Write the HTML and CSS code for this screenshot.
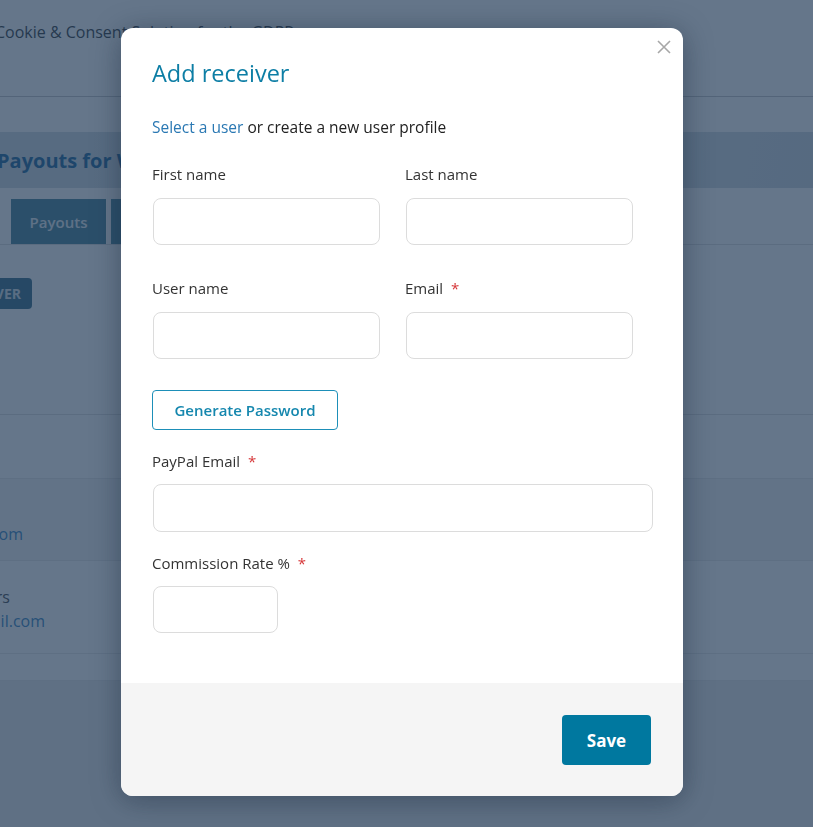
FILE: index.html
```html
<!DOCTYPE html>
<html lang="en">
  <head>
    <meta charset="UTF-8" />
    <meta name="viewport" content="width=device-width, initial-scale=1.0" />
    <title>Add receiver</title>
    <link rel="stylesheet" href="styles.css">
  </head>
  <body>
    <!-- page behind the dialog -->
    <div class="page">
      <div class="topbar">
        <span class="site-title">Cookie &amp; Consent Solution for the GDPR</span>
      </div>
      <div class="banner">
        <h1 class="banner-title">Payouts for WooCommerce</h1>
      </div>
      <div class="tabs">
        <div class="tab">Payouts</div>
        <div class="tab">Receivers</div>
        <div class="tab">Settings</div>
      </div>
      <div class="actions">
        <div class="clip-btn"><span>ADD RECEIVER</span></div>
      </div>
      <div class="table">
        <div class="row row-head"></div>
        <div class="row row-hover">
          <div class="clip w23 link">anna.lee@example.com</div>
        </div>
        <div class="row row-plain">
          <div class="clip w10">Travers</div>
          <div class="clip w45 link">mark.travers@gmail.com</div>
        </div>
        <div class="row row-foot"></div>
      </div>
      <div class="page-bottom"></div>
    </div>

    <div class="overlay">
      <div class="modal">
        <button class="close" aria-label="Close">
          <svg viewBox="0 0 16 16" width="16" height="16">
            <path d="M2 2 L14 14 M14 2 L2 14" stroke="currentColor" stroke-width="1.6" fill="none" />
          </svg>
        </button>
        <div class="modal-body">
          <h2 class="modal-title">Add receiver</h2>
          <p class="intro"><a href="#" class="link-user">Select a user</a> or create a new user profile</p>

          <div class="grid">
            <div class="field">
              <label>First name</label>
              <input type="text" class="input" />
            </div>
            <div class="field">
              <label>Last name</label>
              <input type="text" class="input" />
            </div>
            <div class="field">
              <label>User name</label>
              <input type="text" class="input" />
            </div>
            <div class="field">
              <label>Email <span class="req">*</span></label>
              <input type="text" class="input" />
            </div>
          </div>

          <button class="btn-outline">Generate Password</button>

          <div class="field field-wide">
            <label>PayPal Email <span class="req">*</span></label>
            <input type="text" class="input" />
          </div>

          <div class="field field-small">
            <label>Commission Rate % <span class="req">*</span></label>
            <input type="text" class="input" />
          </div>
        </div>
        <div class="modal-footer">
          <button class="btn-save">Save</button>
        </div>
      </div>
    </div>
  </body>
</html>
```

FILE: styles.css
```css
* {
  margin: 0;
  padding: 0;
  box-sizing: border-box;
}
body {
  width: 813px;
  height: 827px;
  overflow: hidden;
  background-color: #fff;
  font: 15px "Open Sans", "Liberation Sans", sans-serif;
  color: #333;
}

/* page behind */
.page {
  width: 100%;
}
.topbar {
  height: 97px;
  padding-top: 21px;
  border-bottom: 1px solid #c3c4c7;
  white-space: nowrap;
  overflow: hidden;
}
.site-title {
  display: block;
  margin-left: -5px;
  font-size: 16px;
  color: #2c3338;
}
.banner {
  margin-top: 35px;
  height: 56px;
  background: linear-gradient(100deg, #cfd9e0 0%, #d7e0e6 60%, #cdd7de 100%);
  display: flex;
  align-items: center;
  white-space: nowrap;
  overflow: hidden;
}
.banner-title {
  margin-left: -3px;
  font-size: 20px;
  font-weight: 700;
  color: #135e96;
}
.tabs {
  height: 57px;
  display: flex;
  align-items: flex-end;
  gap: 5px;
  padding-left: 11px;
  border-bottom: 1px solid #dcdcde;
}
.tab {
  width: 95px;
  height: 45px;
  display: flex;
  align-items: center;
  justify-content: center;
  background-color: #3f7d95;
  color: #e7eef2;
  font-weight: 600;
}
.actions {
  padding-top: 33px;
  height: 170px;
  border-bottom: 1px solid #dcdcde;
}
.clip-btn {
  width: 32px;
  height: 31px;
  display: flex;
  align-items: center;
  justify-content: flex-end;
  overflow: hidden;
  white-space: nowrap;
  padding-right: 11px;
  border-radius: 0 4px 4px 0;
  background-color: #2e6784;
  color: #d6e2e8;
  font-size: 14px;
  font-weight: 700;
}
.clip-btn span {
  flex-shrink: 0;
}
.row {
  border-bottom: 1px solid #e6e7e8;
}
.row-head {
  height: 64px;
}
.row-hover {
  height: 82px;
  background-color: #f3f4f5;
  padding-top: 43px;
}
.row-plain {
  height: 93px;
  padding-top: 24px;
}
.row-foot {
  height: 27px;
}
.clip {
  display: flex;
  justify-content: flex-end;
  overflow: hidden;
  white-space: nowrap;
  font-size: 16px;
  line-height: 24px;
  color: #3c434a;
}
.clip.link {
  color: #2f7fc0;
}
.w23 {
  width: 23px;
}
.w10 {
  width: 10px;
}
.w45 {
  width: 45px;
}
.page-bottom {
  height: 200px;
  background-color: #ececec;
}

/* dialog */
.overlay {
  position: fixed;
  inset: 0;
  background-color: rgba(35, 60, 88, 0.7);
  padding: 28px 0 0 121px;
}
.modal {
  position: relative;
  width: 562px;
  background-color: #fff;
  border-radius: 12px;
  overflow: hidden;
  box-shadow: 0 4px 30px rgba(20, 35, 55, 0.45);
}
.close {
  position: absolute;
  top: 11px;
  right: 11px;
  width: 16px;
  height: 16px;
  border: none;
  background: none;
  color: #a7a7a7;
  cursor: pointer;
}
.close svg {
  display: block;
}
.modal-body {
  padding: 30px 31px 50px 31px;
}
.modal-title {
  font-size: 23.5px;
  line-height: 30px;
  font-weight: 500;
  color: #0d7ea5;
}
.intro {
  margin-top: 28px;
  font-size: 15.5px;
  line-height: 22px;
  color: #222;
}
.link-user {
  color: #2a78b3;
  text-decoration: none;
}
.grid {
  margin-top: 25px;
  display: grid;
  grid-template-columns: 227px 227px;
  column-gap: 26px;
  row-gap: 32px;
}
.field {
  display: flex;
  flex-direction: column;
  gap: 12px;
}
.field label {
  line-height: 22px;
  color: #333;
}
.grid .field {
  gap: 13px;
}
.req {
  margin-left: 4px;
  color: #d63638;
}
.input {
  height: 47px;
  width: 100%;
  border: 1px solid #dcdcdc;
  border-radius: 8px;
  background-color: #fff;
  font: inherit;
  margin-left: 1px;
}
.btn-outline {
  margin-top: 31px;
  height: 40px;
  width: 186px;
  border: 1px solid #1d8fb8;
  border-radius: 4px;
  background-color: #fff;
  color: #1587ae;
  font: 600 15px "Open Sans", sans-serif;
  cursor: pointer;
}
.field-wide {
  margin-top: 20px;
}
.field-wide .input {
  height: 48px;
  width: 500px;
}
.field-small {
  margin-top: 20px;
}
.field-small .input {
  width: 125px;
}
.modal-footer {
  height: 113px;
  background-color: #f5f5f5;
  display: flex;
  justify-content: flex-end;
  align-items: flex-start;
  padding: 32px 32px 0 0;
}
.btn-save {
  width: 89px;
  height: 50px;
  border: none;
  border-radius: 4px;
  background-color: #00789f;
  color: #fff;
  font: 700 17px "Open Sans", sans-serif;
  cursor: pointer;
}
```
